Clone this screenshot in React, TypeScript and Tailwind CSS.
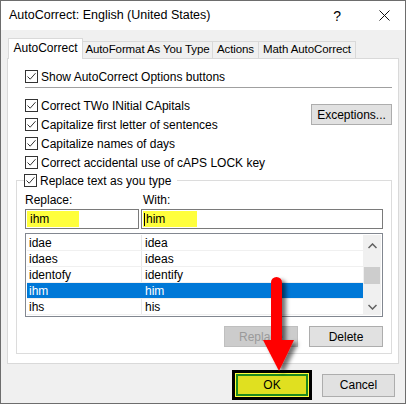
import React from 'react';

const ROWS = [
  { from: 'idae', to: 'idea' },
  { from: 'idaes', to: 'ideas' },
  { from: 'identofy', to: 'identify' },
  { from: 'ihm', to: 'him', selected: true },
  { from: 'ihs', to: 'his' },
];

function Check({ label }: { label: string }) {
  return (
    <div className="flex items-center h-[19px] whitespace-nowrap">
      <span className="w-[13px] h-[13px] border border-[#333333] bg-white flex items-center justify-center shrink-0">
        <svg width="11" height="11" viewBox="0 0 11 11">
          <path d="M1.5 5.5 L4.2 8.2 L9.5 2.2" fill="none" stroke="#333333" strokeWidth="1" />
        </svg>
      </span>
      <span className="ml-[3px]">{label}</span>
    </div>
  );
}

function Btn({ children, disabled, className = '' }: { children: React.ReactNode; disabled?: boolean; className?: string }) {
  return (
    <div
      className={`h-[21px] flex items-center justify-center border ${
        disabled ? 'bg-[#cccccc] border-[#bfbfbf] text-[#9a9a9a]' : 'bg-[#e1e1e1] border-[#adadad] text-black'
      } ${className}`}
    >
      {children}
    </div>
  );
}

export default function App() {
  return (
    <div className="w-[408px] h-[404px] bg-white text-[12px] text-black font-['Liberation_Sans',Arial,sans-serif] leading-none relative">
      <div className="w-[406px] h-[404px] border border-[#6d6d6d] flex flex-col">
        {/* Title bar */}
        <div className="h-[29px] bg-white flex items-center pl-[8px] shrink-0">
          <span className="text-[12.5px]">AutoCorrect: English (United States)</span>
          <span className="ml-auto text-[14px] mr-[38px]">?</span>
          <svg width="11" height="11" viewBox="0 0 11 11" className="mr-[15px]">
            <path d="M0.5 0.5 L10.5 10.5 M10.5 0.5 L0.5 10.5" stroke="#111" strokeWidth="1" />
          </svg>
        </div>

        {/* Body */}
        <div className="flex-1 bg-[#f0f0f0] px-[6px] pt-[8px]">
          {/* Tabs */}
          <div className="flex items-end h-[20px] pl-[1px] whitespace-nowrap text-[11.5px] tracking-[-0.1px]">
            <div className="relative z-10 -mb-px h-[21px] w-[75px] bg-white border border-b-0 border-[#d9d9d9] flex items-center justify-center pb-[2px] text-[12px] tracking-normal">
              AutoCorrect
            </div>
            <div className="h-[17px] w-[130px] border border-l-0 border-b-0 border-[#d9d9d9] flex items-center justify-center">
              AutoFormat As You Type
            </div>
            <div className="h-[17px] w-[46px] border border-l-0 border-b-0 border-[#d9d9d9] flex items-center justify-center">
              Actions
            </div>
            <div className="h-[17px] w-[97px] border border-l-0 border-b-0 border-[#d9d9d9] flex items-center justify-center">
              Math AutoCorrect
            </div>
          </div>

          {/* Panel */}
          <div className="w-[392px] h-[306px] bg-white border border-[#d9d9d9] pt-[8px] pl-[8px] pr-[6px]">
            <div className="pl-[9px]">
              <Check label="Show AutoCorrect Options buttons" />
            </div>
            <div className="ml-[9px] h-px bg-[#a0a0a0] mt-px" />

            <div className="flex pl-[9px] mt-[8px]">
              <div className="flex flex-col">
                <Check label="Correct TWo INitial CApitals" />
                <Check label="Capitalize first letter of sentences" />
                <Check label="Capitalize names of days" />
                <Check label="Correct accidental use of cAPS LOCK key" />
              </div>
              <Btn className="ml-auto mt-[8px] w-[81px]">Exceptions...</Btn>
            </div>

            <fieldset className="w-[376px] border border-[#dcdcdc] px-[8px] pb-[6px] -mt-[1px]">
              <legend className="pr-[6px] -ml-px">
                <Check label="Replace text as you type" />
              </legend>

              <div className="flex h-[19px] items-center">
                <span className="w-[118px]">Replace:</span>
                <span>With:</span>
              </div>

              <div className="flex gap-[2px]">
                <div className="w-[114px] h-[20px] border border-[#7a7a7a] bg-white p-px flex">
                  <div className="w-[52px] bg-[#ffff3c] flex items-center pl-[3px]">ihm</div>
                </div>
                <div className="flex-1 h-[20px] border border-[#7a7a7a] bg-white p-px flex">
                  <div className="w-[54px] bg-[#ffff3c] flex items-center pl-[1px]">
                    <span className="w-px h-[13px] bg-black mr-px" />
                    him
                  </div>
                </div>
              </div>

              <div className="mt-[4px] h-[84px] border border-[#828790] bg-white p-px flex">
                <div className="flex-1 flex flex-col">
                  {ROWS.map((r) => (
                    <div
                      key={r.from}
                      className={`flex h-[16px] border-b border-[#f0f0f0] ${r.selected ? 'bg-[#0078d7] text-white' : ''}`}
                    >
                      <div className={`w-[115px] pl-[2px] flex items-center border-r ${r.selected ? 'border-[#0078d7]' : 'border-[#e8e8e8]'}`}>
                        {r.from}
                      </div>
                      <div className="flex-1 pl-[3px] flex items-center">{r.to}</div>
                    </div>
                  ))}
                </div>
                <div className="w-[18px] bg-[#f0f0f0] flex flex-col items-center">
                  <svg width="9" height="6" viewBox="0 0 9 6" className="mt-[8px]">
                    <path d="M0.5 5 L4.5 1 L8.5 5" fill="none" stroke="#606060" strokeWidth="1.5" />
                  </svg>
                  <div className="w-[16px] h-[17px] bg-[#cdcdcd] mt-[18px]" />
                  <svg width="9" height="6" viewBox="0 0 9 6" className="mt-auto mb-[5px]">
                    <path d="M0.5 1 L4.5 5 L8.5 1" fill="none" stroke="#606060" strokeWidth="1.5" />
                  </svg>
                </div>
              </div>

              <div className="flex justify-end gap-[11px] mt-[9px]">
                <Btn disabled className="w-[74px]">Replace</Btn>
                <Btn className="w-[74px]">Delete</Btn>
              </div>
            </fieldset>
          </div>

          {/* Dialog buttons */}
          <div className="flex justify-end items-center mt-[6px] pr-[4px]">
            <div className="w-[80px] h-[30px] border-[3px] border-black bg-[#ffff3c] p-px">
              <div className="w-full h-full border-2 border-[#1e8a1e] bg-[#e0e020] flex items-center justify-center">
                OK
              </div>
            </div>
            <Btn className="w-[73px] h-[23px] ml-[10px]">Cancel</Btn>
          </div>
        </div>
      </div>

      {/* Red annotation arrow */}
      <svg className="absolute left-0 top-0 pointer-events-none" width="408" height="404" viewBox="0 0 408 404">
        <defs>
          <filter id="sh" x="-50%" y="-50%" width="200%" height="200%">
            <feDropShadow dx="4" dy="3" stdDeviation="2" floodColor="#000" floodOpacity="0.55" />
          </filter>
        </defs>
        <g filter="url(#sh)">
          <rect x="271" y="277" width="11" height="68" rx="5.5" fill="#ff0000" />
          <path d="M263 340 L294 340 L279 371 Z" fill="#ff0000" />
        </g>
      </svg>
    </div>
  );
}
